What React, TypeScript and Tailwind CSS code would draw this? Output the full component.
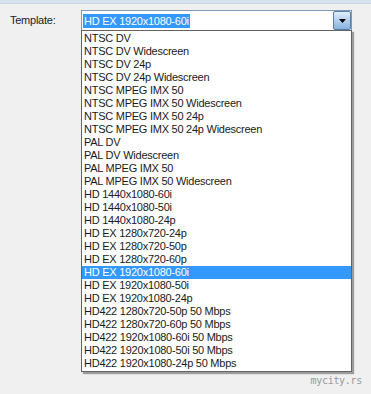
const options = [
  "NTSC DV",
  "NTSC DV Widescreen",
  "NTSC DV 24p",
  "NTSC DV 24p Widescreen",
  "NTSC MPEG IMX 50",
  "NTSC MPEG IMX 50 Widescreen",
  "NTSC MPEG IMX 50 24p",
  "NTSC MPEG IMX 50 24p Widescreen",
  "PAL DV",
  "PAL DV Widescreen",
  "PAL MPEG IMX 50",
  "PAL MPEG IMX 50 Widescreen",
  "HD 1440x1080-60i",
  "HD 1440x1080-50i",
  "HD 1440x1080-24p",
  "HD EX 1280x720-24p",
  "HD EX 1280x720-50p",
  "HD EX 1280x720-60p",
  "HD EX 1920x1080-60i",
  "HD EX 1920x1080-50i",
  "HD EX 1920x1080-24p",
  "HD422 1280x720-50p 50 Mbps",
  "HD422 1280x720-60p 50 Mbps",
  "HD422 1920x1080-60i 50 Mbps",
  "HD422 1920x1080-50i 50 Mbps",
  "HD422 1920x1080-24p 50 Mbps",
];

const selected = "HD EX 1920x1080-60i";

export default function App() {
  return (
    <div className="relative w-[371px] h-[394px] overflow-hidden bg-[#f0f0f0] font-['Liberation_Sans',Arial,sans-serif] text-[11px] tracking-[-0.25px] text-[#1a1a1a]">
      <div className="h-[4px] bg-[#d7e3ef] border-b border-[#c5d3e2]" />
      <div className="flex items-start pt-[6px]">
        <div className="w-[81px] pl-[10px] pt-[4px] leading-[13px] text-[#222]">Template:</div>
        <div className="flex flex-col w-[271px]">
          <div className="flex h-[21px] border border-[#7f9db9] bg-white">
            <div className="flex-1 flex items-center pl-px">
              <span className="bg-[#3399ff] text-white leading-[14px] px-px">{selected}</span>
            </div>
            <div className="w-[18px] h-[19px] flex items-center justify-center rounded-[2px] border border-[#5a7ea8] bg-linear-to-b from-[#e1eefa] via-[#b3d0ee] to-[#86b2df]">
              <svg width="7" height="4" viewBox="0 0 7 4">
                <path d="M0 0h7L3.5 4z" fill="#000" />
              </svg>
            </div>
          </div>
          <div className="-mt-px border border-[#646464] bg-white shadow-[2px_2px_1px_rgba(0,0,0,0.35)] py-px">
            {options.map((o) => (
              <div
                key={o}
                className={
                  o === selected
                    ? "h-[13px] leading-[13px] pl-[2px] bg-[#3399ff] text-white"
                    : "h-[13px] leading-[13px] pl-[2px]"
                }
              >
                {o}
              </div>
            ))}
          </div>
        </div>
      </div>
      <div className="absolute right-[9px] bottom-[6px] font-['DejaVu_Sans_Mono',monospace] text-[10px] tracking-[-0.3px] text-[#9a9a9a]">
        mycity.rs
      </div>
    </div>
  );
}
